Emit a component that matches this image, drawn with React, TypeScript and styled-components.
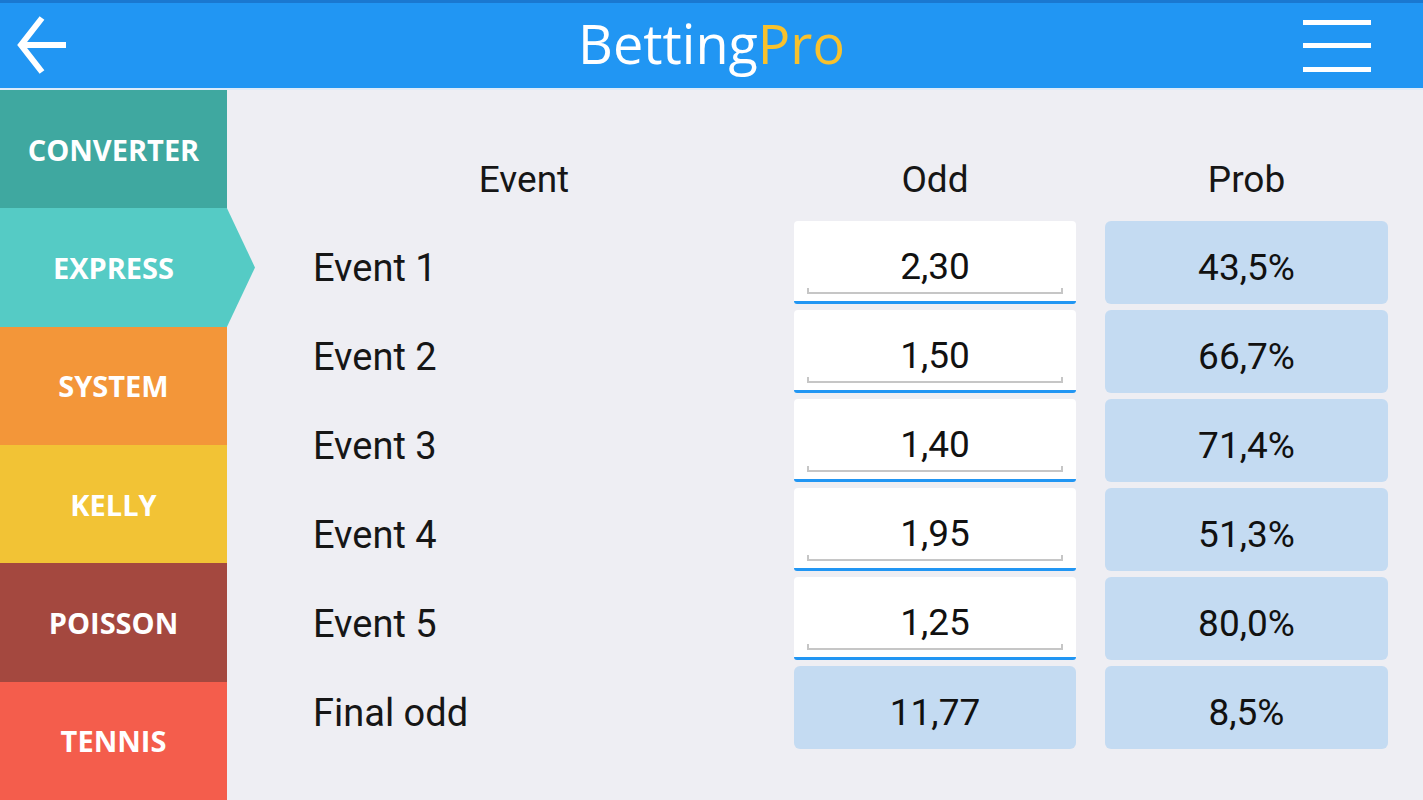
import React from "react";
import styled, { createGlobalStyle } from "styled-components";

const Global = createGlobalStyle`
  html, body { margin: 0; padding: 0; }
  body { width: 1423px; height: 800px; overflow: hidden; background: #eeeef3; font-family: Roboto, "Liberation Sans", sans-serif; }
  * { box-sizing: border-box; }
`;

const Page = styled.div`
  width: 1423px;
  height: 800px;
  display: flex;
  flex-direction: column;
  background: #eeeef3;
`;

const Header = styled.header`
  height: 90px;
  flex: none;
  background: #2196f3;
  border-top: 3px solid #1a78d0;
  border-bottom: 2px solid #dcebfa;
  display: grid;
  grid-template-columns: 1fr auto 1fr;
  align-items: center;
`;

const BackButton = styled.div`
  display: flex;
  align-items: center;
  padding-left: 16px;
  height: 100%;
`;

const Title = styled.h1`
  margin: 0;
  font-family: "Open Sans", "Noto Sans", sans-serif;
  font-weight: 400;
  font-size: 54px;
  line-height: 60px;
  color: #ffffff;
  margin-top: -6px;
`;

const Pro = styled.span`
  color: #f8c12c;
`;

const MenuButton = styled.div`
  display: flex;
  justify-content: flex-end;
  align-items: center;
  padding-right: 52px;
  height: 100%;
`;

const Main = styled.div`
  flex: 1;
  display: flex;
  min-height: 0;
`;

const Sidebar = styled.nav`
  width: 227px;
  flex: none;
  display: flex;
  flex-direction: column;
`;

const NavItem = styled.div<{ $bg: string; $active?: boolean }>`
  flex: 1;
  position: relative;
  background: ${(p) => p.$bg};
  display: flex;
  align-items: center;
  justify-content: center;
  font-family: "Open Sans", "Noto Sans", sans-serif;
  font-weight: 700;
  font-size: 29px;
  color: #ffffff;
  padding-top: 0px;
  ${(p) =>
    p.$active
      ? `
    &::after {
      content: "";
      position: absolute;
      top: 0;
      bottom: 0;
      left: 100%;
      width: 28px;
      background: ${p.$bg};
      clip-path: polygon(0 0, 100% 50%, 0 100%);
    }
  `
      : ""}
`;

const Content = styled.section`
  flex: 1;
  padding: 42px 35px 0 35px;
`;

const Table = styled.div`
  display: grid;
  grid-template-columns: 503px 282px 283px;
  grid-template-rows: repeat(7, 83px);
  column-gap: 29px;
  row-gap: 6px;
`;

const HeadCell = styled.div<{ $shift?: number }>`
  display: flex;
  align-items: center;
  justify-content: center;
  padding-top: 11px;
  padding-left: ${(p) => p.$shift ?? 0}px;
  font-size: 37px;
  color: #161616;
`;

const Label = styled.div`
  display: flex;
  align-items: center;
  padding-left: 51px;
  padding-top: 10px;
  font-size: 38px;
  color: #161616;
`;

const InputCell = styled.div`
  position: relative;
  background: #ffffff;
  border-radius: 4px 4px 3px 3px;
  border-bottom: 3px solid #2196f3;
  display: flex;
  align-items: center;
  justify-content: center;
  padding-top: 10px;
  font-size: 37px;
  color: #111111;
  &::after {
    content: "";
    position: absolute;
    left: 13px;
    right: 13px;
    bottom: 7px;
    height: 4px;
    border: 2px solid #c6c6c6;
    border-top: none;
  }
`;

const ValueCell = styled.div`
  background: #c4dbf2;
  border-radius: 6px;
  display: flex;
  align-items: center;
  justify-content: center;
  padding-top: 10px;
  font-size: 37px;
  color: #111111;
`;

const navItems = [
  { label: "CONVERTER", bg: "#3fa8a0" },
  { label: "EXPRESS", bg: "#55cbc5", active: true },
  { label: "SYSTEM", bg: "#f39639" },
  { label: "KELLY", bg: "#f2c335" },
  { label: "POISSON", bg: "#a4483f" },
  { label: "TENNIS", bg: "#f45d4c" },
];

const rows = [
  { label: "Event 1", odd: "2,30", prob: "43,5%" },
  { label: "Event 2", odd: "1,50", prob: "66,7%" },
  { label: "Event 3", odd: "1,40", prob: "71,4%" },
  { label: "Event 4", odd: "1,95", prob: "51,3%" },
  { label: "Event 5", odd: "1,25", prob: "80,0%" },
];

export default function App() {
  return (
    <Page>
      <Global />
      <Header>
        <BackButton>
          <svg width="56" height="64" viewBox="0 0 56 64" fill="none">
            <path d="M26 4 L5 31 L26 58" stroke="#fff" strokeWidth="6" strokeLinejoin="miter" />
            <path d="M5 31 H50" stroke="#fff" strokeWidth="6" />
          </svg>
        </BackButton>
        <Title>
          Betting<Pro>Pro</Pro>
        </Title>
        <MenuButton>
          <svg width="68" height="56" viewBox="0 0 68 56" fill="none">
            <rect x="0" y="2" width="68" height="5" fill="#fff" />
            <rect x="0" y="25" width="68" height="5" fill="#fff" />
            <rect x="0" y="49" width="68" height="5" fill="#fff" />
          </svg>
        </MenuButton>
      </Header>
      <Main>
        <Sidebar>
          {navItems.map((n) => (
            <NavItem key={n.label} $bg={n.bg} $active={n.active}>
              {n.label}
            </NavItem>
          ))}
        </Sidebar>
        <Content>
          <Table>
            <HeadCell $shift={21}>Event</HeadCell>
            <HeadCell>Odd</HeadCell>
            <HeadCell>Prob</HeadCell>
            {rows.map((r) => (
              <React.Fragment key={r.label}>
                <Label>{r.label}</Label>
                <InputCell>{r.odd}</InputCell>
                <ValueCell>{r.prob}</ValueCell>
              </React.Fragment>
            ))}
            <Label>Final odd</Label>
            <ValueCell>11,77</ValueCell>
            <ValueCell>8,5%</ValueCell>
          </Table>
        </Content>
      </Main>
    </Page>
  );
}
